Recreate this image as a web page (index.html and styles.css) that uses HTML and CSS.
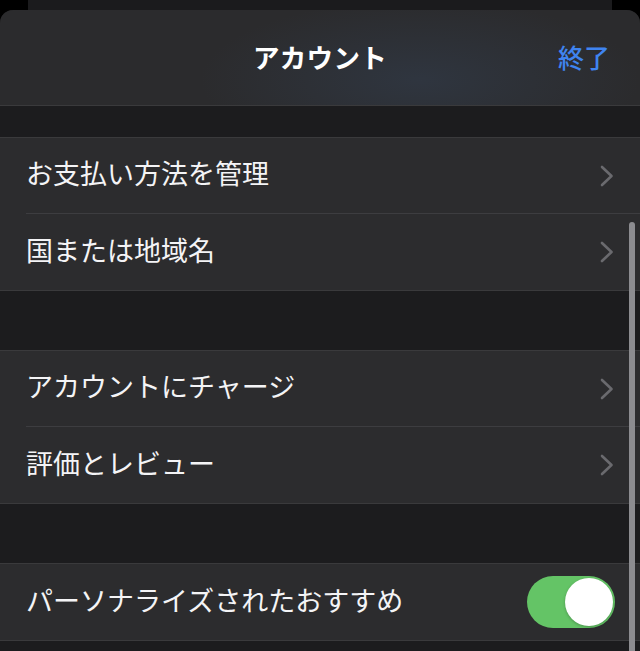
FILE: index.html
```html
<!DOCTYPE html>
<html lang="ja">
<head>
<meta charset="utf-8">
<link rel="stylesheet" href="styles.css">
</head>
<body>
<div class="backcard"></div>
<div class="sheet">
  <header class="header">
    <div class="title">アカウント</div>
    <div class="done">終了</div>
  </header>
  <div class="gap gap-top"></div>
  <section class="group">
    <div class="row"><div class="row-inner"><span class="label">お支払い方法を管理</span><svg class="chev" viewBox="0 0 14 22"><path d="M2 2 L11.5 11 L2 20" /></svg></div></div>
    <div class="row"><div class="row-inner"><span class="label">国または地域名</span><svg class="chev" viewBox="0 0 14 22"><path d="M2 2 L11.5 11 L2 20" /></svg></div></div>
  </section>
  <div class="gap"></div>
  <section class="group">
    <div class="row"><div class="row-inner"><span class="label">アカウントにチャージ</span><svg class="chev" viewBox="0 0 14 22"><path d="M2 2 L11.5 11 L2 20" /></svg></div></div>
    <div class="row"><div class="row-inner"><span class="label">評価とレビュー</span><svg class="chev" viewBox="0 0 14 22"><path d="M2 2 L11.5 11 L2 20" /></svg></div></div>
  </section>
  <div class="gap"></div>
  <section class="group">
    <div class="row"><div class="row-inner toggle-row"><span class="label">パーソナライズされたおすすめ</span><span class="toggle"><span class="knob"></span></span></div></div>
  </section>
  <div class="gap"></div>
  <div class="scrollbar"></div>
</div>
</body>
</html>
```
FILE: styles.css
```css
html, body {
  margin: 0;
  padding: 0;
  background: #000;
  height: 100%;
  overflow: hidden;
}
body {
  font-family: "Noto Sans CJK JP", "Noto Sans", sans-serif;
  color: #f4f4f6;
}
.backcard {
  height: 10px;
  margin: 0 28px;
  background: #1b1b1d;
}
.sheet {
  position: relative;
  background: #1c1c1e;
  border-radius: 13px 13px 0 0;
  overflow: hidden;
  height: 641px;
}
.header {
  height: 95px;
  border-bottom: 1px solid #3a3a3c;
  background:
    radial-gradient(ellipse 220px 80px at 420px 70px, rgba(52, 66, 86, 0.45), rgba(52, 66, 86, 0) 100%),
    #2b2b2d;
  display: flex;
  align-items: center;
  justify-content: center;
  position: relative;
}
.title {
  font-size: 26.5px;
  font-weight: 700;
  color: #ffffff;
  letter-spacing: 0.3px;
  padding-bottom: 3px;
}
.done {
  position: absolute;
  right: 30px;
  top: 0;
  height: 92px;
  display: flex;
  align-items: center;
  font-size: 26px;
  font-weight: 500;
  color: #3f84f0;
}
.gap {
  height: 59px;
  background: #1c1c1e;
}
.gap-top {
  height: 31px;
}
.group {
  background: #2c2c2e;
  border-top: 1px solid #3a3a3c;
  border-bottom: 1px solid #3a3a3c;
}
.row {
  padding-left: 26px;
}
.row-inner {
  height: 76px;
  box-sizing: border-box;
  display: flex;
  align-items: center;
  justify-content: space-between;
  padding-right: 26px;
  border-bottom: 1px solid #3d3d40;
}
.row:last-child .row-inner {
  border-bottom: none;
}
.label {
  font-size: 27px;
  font-weight: 400;
  line-height: 1;
  padding-bottom: 6px;
}
.chev {
  width: 14px;
  height: 22px;
  fill: none;
  stroke: #6a6a6e;
  stroke-width: 2.6;
  stroke-linecap: round;
  stroke-linejoin: round;
}
.toggle-row {
  padding-right: 25px;
}
.toggle {
  width: 88px;
  height: 52px;
  border-radius: 26px;
  background: #64c466;
  display: flex;
  align-items: center;
  justify-content: flex-end;
  padding: 0 2px;
  box-sizing: border-box;
}
.knob {
  width: 48px;
  height: 48px;
  border-radius: 50%;
  background: #ffffff;
  box-shadow: 0 1px 3px rgba(0, 0, 0, 0.25);
}
.scrollbar {
  position: absolute;
  right: 5px;
  top: 212px;
  width: 6px;
  height: 500px;
  border-radius: 3px;
  background: #8c8c90;
}
```
